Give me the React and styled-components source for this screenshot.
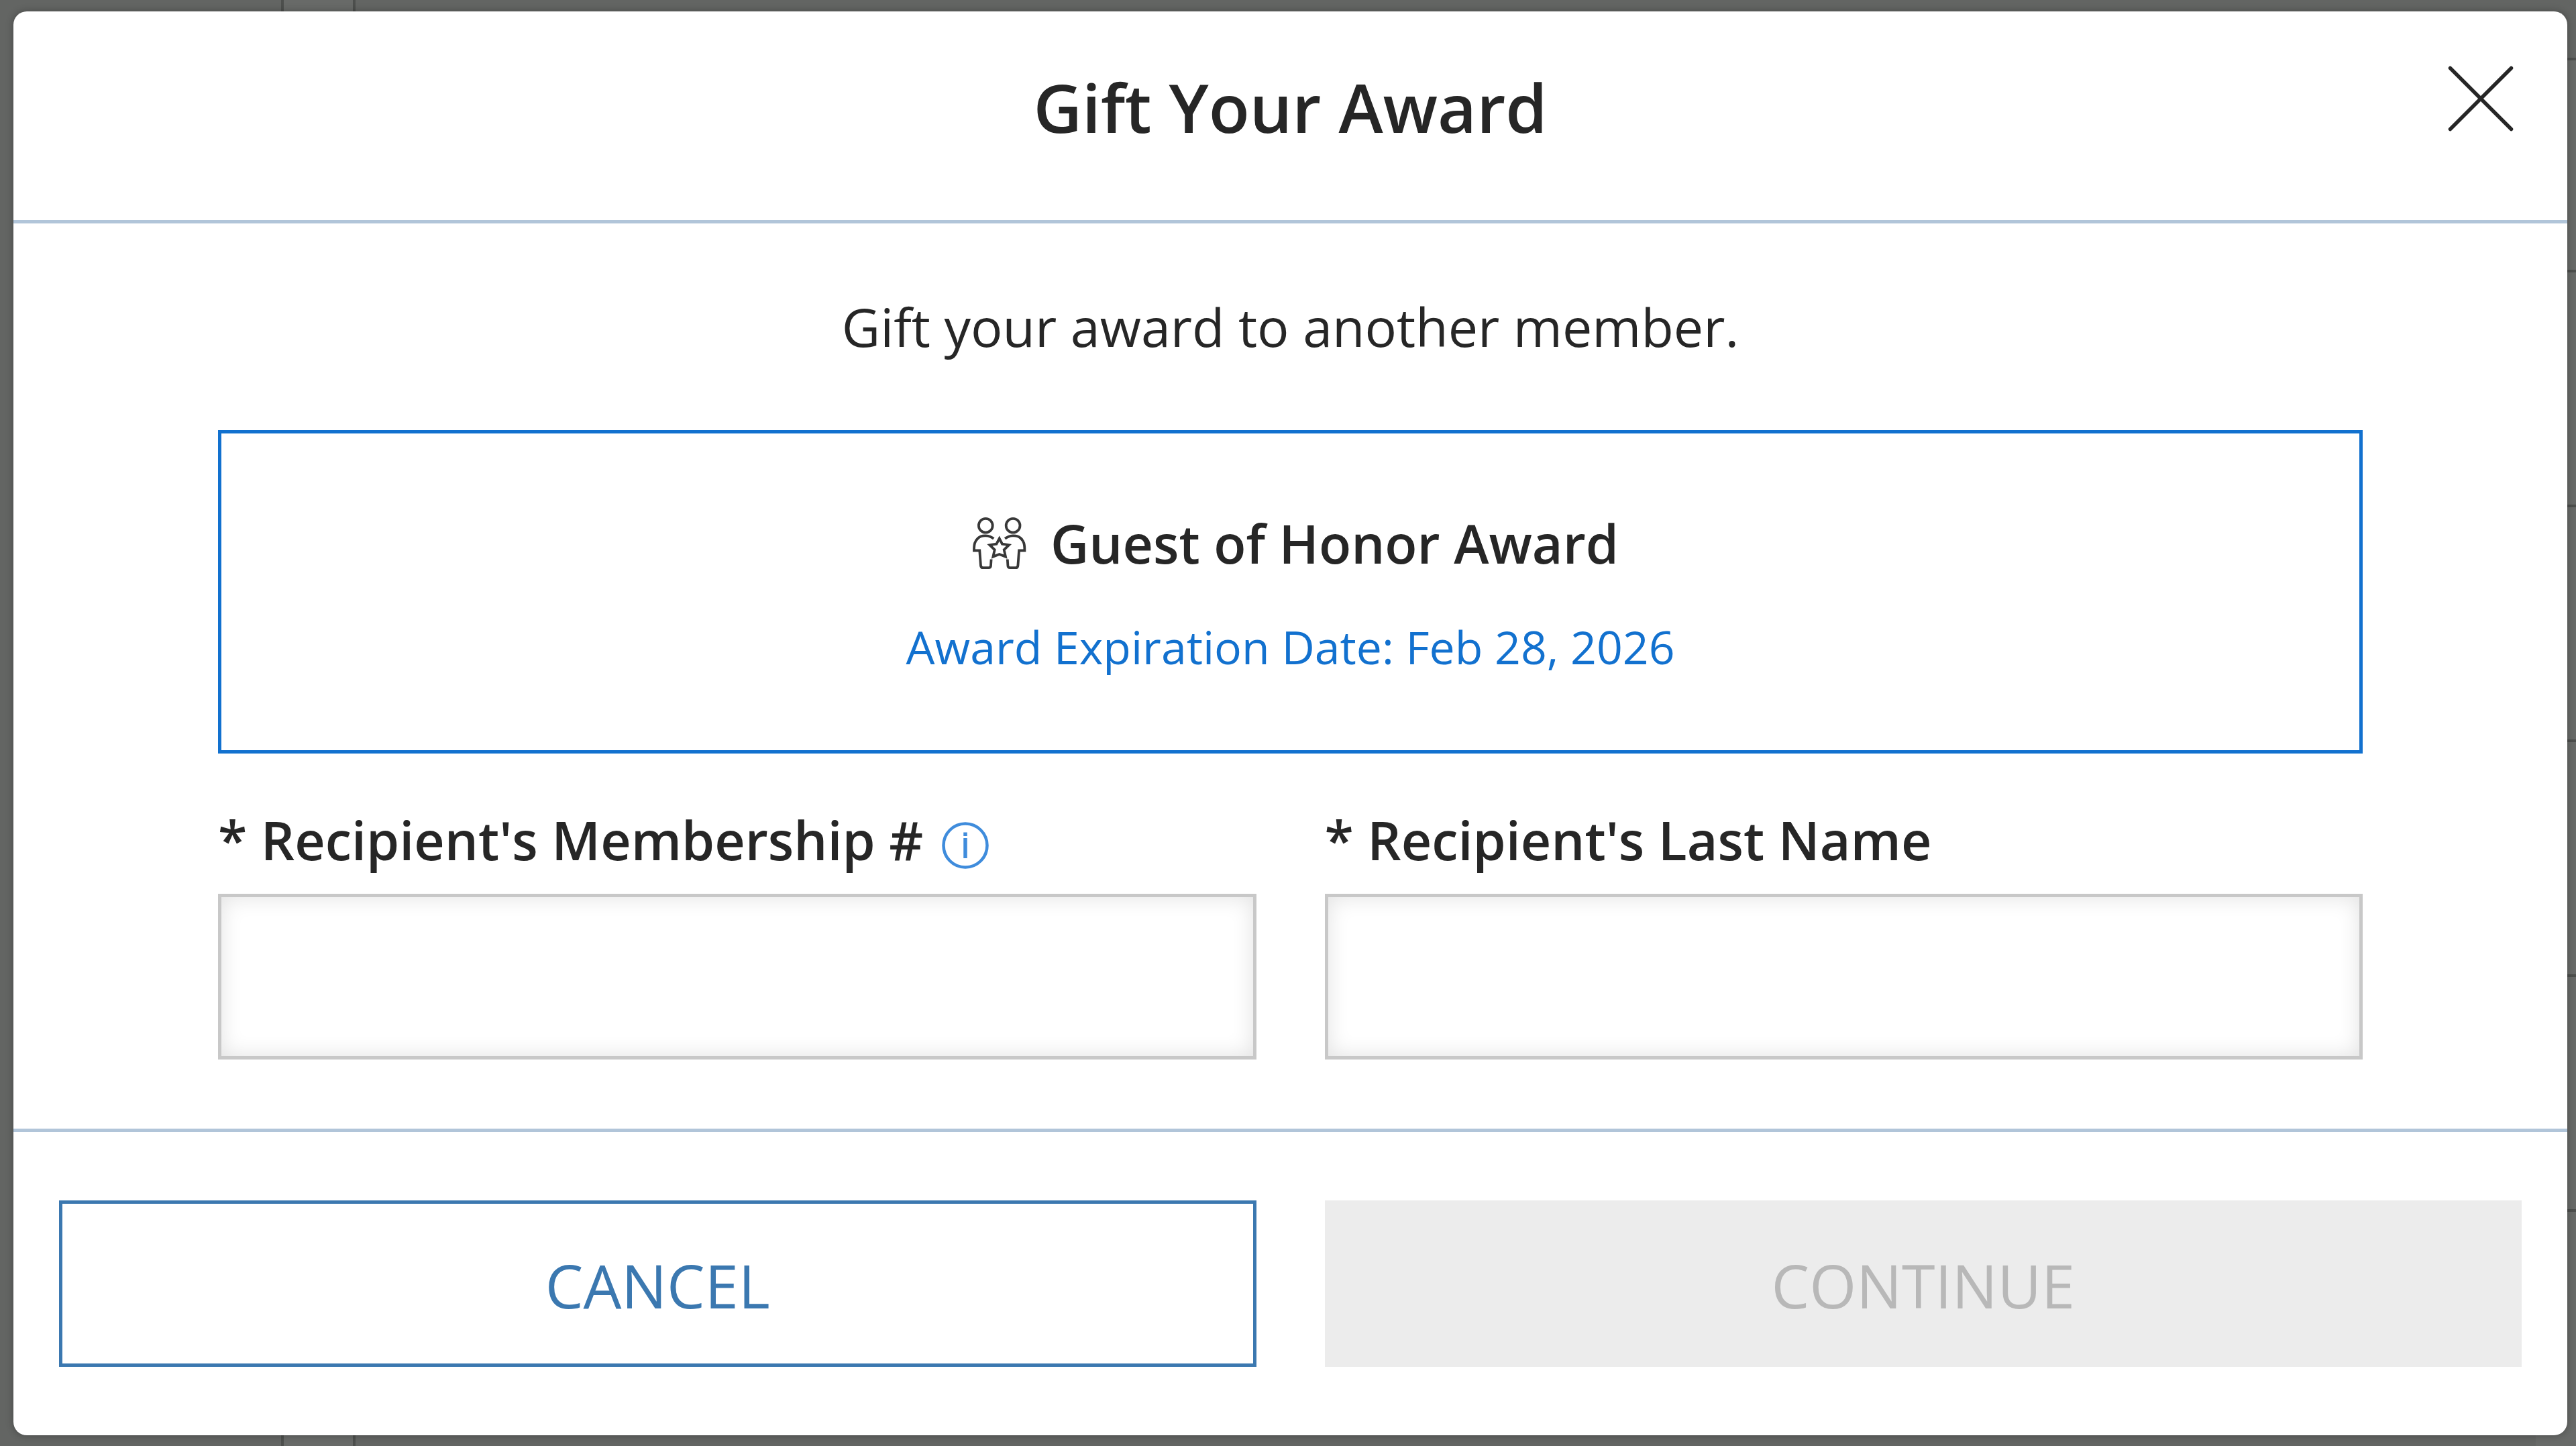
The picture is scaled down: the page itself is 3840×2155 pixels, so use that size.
import React, { useState } from "react";
import styled, { createGlobalStyle } from "styled-components";

const rows = [316, 350, 350, 350, 350];

export default function App() {
  const [member, setMember] = useState("");
  const [lastName, setLastName] = useState("");
  const ready = member !== "" && lastName !== "";

  return (
    <Screen>
      <GlobalStyle />
      <Behind aria-hidden="true">
        <BehindNav />
        <BehindGutter />
        <BehindMain />
        <BehindList>
          <BehindTop />
          {rows.map((height, i) => (
            <BehindRow key={i} $height={height} />
          ))}
          <BehindRest />
        </BehindList>
      </Behind>
      <Modal role="dialog" aria-modal="true" aria-labelledby="gift-title">
        <Header>
          <Title id="gift-title">Gift Your Award</Title>
          <CloseButton type="button" aria-label="Close">
            <CloseIcon />
          </CloseButton>
        </Header>
        <Body>
          <Intro>Gift your award to another member.</Intro>
          <AwardCard>
            <AwardName>
              <GuestsIcon />
              Guest of Honor Award
            </AwardName>
            <AwardDate>Award Expiration Date: Feb 28, 2026</AwardDate>
          </AwardCard>
          <Fields>
            <Field>
              <LabelRow>
                <Label htmlFor="member">* Recipient's Membership #</Label>
                <InfoButton type="button" aria-label="About membership numbers">
                  <InfoIcon />
                </InfoButton>
              </LabelRow>
              <Input
                id="member"
                type="text"
                value={member}
                onChange={(e) => setMember(e.target.value)}
              />
            </Field>
            <Field>
              <LabelRow>
                <Label htmlFor="last-name">* Recipient's Last Name</Label>
              </LabelRow>
              <Input
                id="last-name"
                type="text"
                value={lastName}
                onChange={(e) => setLastName(e.target.value)}
              />
            </Field>
          </Fields>
        </Body>
        <Footer>
          <Button type="button">CANCEL</Button>
          <Button type="button" disabled={!ready}>
            CONTINUE
          </Button>
        </Footer>
      </Modal>
    </Screen>
  );
}

function CloseIcon() {
  return (
    <svg
      width="98"
      height="98"
      viewBox="0 0 98 98"
      fill="none"
      stroke="#262626"
      strokeWidth="5.5"
      strokeLinecap="round"
    >
      <path d="M3.500 3.500 94.500 94.500M94.500 3.500 3.500 94.500" />
    </svg>
  );
}

function InfoIcon() {
  return (
    <svg width="70" height="70" viewBox="0 0 70 70" fill="none" stroke="#3f8cdc">
      <circle cx="35" cy="35" r="32.500" strokeWidth="4.500" />
      <path d="M35 15.500v5.500M35 24v30" strokeWidth="5.500" />
    </svg>
  );
}

function GuestsIcon() {
  return (
    <svg width="80" height="78" viewBox="0 0 80 78" fill="none" stroke="#383838" strokeWidth="3.8">
      <circle cx="19.300" cy="12.300" r="10.400" />
      <circle cx="60.100" cy="12.300" r="10.400" />
      <path d="M31.300 31.800C25 26.500 14 25.500 8 31C3 35.500 2 40 2 49.500H10.300L12 72q.300 3.200 3.500 3.200h8.200q3.200 0 3.300-3.200l.600-9.500" />
      <path d="M48.100 31.800C54.400 26.500 65.400 25.500 71.400 31C76.400 35.500 77.400 40 77.400 49.500H69.100L67.400 72q-.300 3.200-3.500 3.200h-8.200q-3.200 0-3.300-3.200l-.600-9.500" />
      <path d="M39.700 31.500 44 39.700 54 41.200 46.700 48.400 49 58.600 39.700 55 30.400 58.600 32.700 48.400 25.400 41.200 35.400 39.700Z" />
    </svg>
  );
}

const GlobalStyle = createGlobalStyle`
  * {
    box-sizing: border-box;
  }
  body {
    margin: 0;
    background: #636563;
    font-family: "Open Sans", "Noto Sans", sans-serif;
    color: #262626;
  }
  button, input {
    font-family: inherit;
  }
`;

const Screen = styled.div`
  position: relative;
  min-height: 100vh;
  padding: 17px 13px 16px 20px;
`;

/* the dimmed page under the dialog */
const Behind = styled.div`
  position: absolute;
  inset: 0;
  display: flex;
  overflow: hidden;
`;

const BehindNav = styled.div`
  width: 423px;
  border-right: 4px solid #4d4f4d;
`;

const BehindGutter = styled.div`
  width: 107px;
  background: #686a68;
  border-right: 4px solid #4d4f4d;
`;

const BehindMain = styled.div`
  flex: 1;
`;

const BehindList = styled.div`
  display: flex;
  flex-direction: column;
  width: 60px;
`;

const BehindTop = styled.div`
  height: 86px;
`;

const BehindRow = styled.div`
  height: ${(props) => props.$height}px;
  background: #686a68;
  border-top: 4px solid #4d4f4d;
`;

const BehindRest = styled.div`
  flex: 1;
  background: #686a68;
  border-top: 4px solid #4d4f4d;
`;

const Modal = styled.section`
  position: relative;
  background: #fff;
  border-radius: 20px;
  box-shadow: 0 0 12px rgba(0, 0, 0, 0.3);
`;

const Header = styled.header`
  display: grid;
  grid-template-columns: 1fr auto 1fr;
  align-items: start;
  height: 316px;
  padding: 70px 80px 0;
  border-bottom: 5px solid #b1c5d9;
`;

const Title = styled.h1`
  grid-column: 2;
  margin: 0;
  font-size: 100px;
  line-height: 144px;
  font-weight: 600;
`;

const CloseButton = styled.button`
  justify-self: end;
  display: flex;
  margin-top: 11px;
  padding: 0;
  border: 0;
  background: none;
  cursor: pointer;
`;

const Body = styled.div`
  padding: 96px 305px 103px;
`;

const Intro = styled.p`
  margin: 0 0 96px;
  font-size: 79px;
  line-height: 116px;
  text-align: center;
`;

const AwardCard = styled.div`
  display: flex;
  flex-direction: column;
  align-items: center;
  gap: 38px;
  padding: 106px 0 96px;
  border: 5px solid #1271cf;
`;

const AwardName = styled.h2`
  display: flex;
  align-items: center;
  gap: 36px;
  margin: 0;
  padding-left: 16px;
  font-size: 79px;
  line-height: 116px;
  font-weight: 600;
`;

const AwardDate = styled.p`
  margin: 0;
  font-size: 68px;
  line-height: 116px;
  color: #1271cf;
`;

const Fields = styled.div`
  display: grid;
  grid-template-columns: 1fr 1fr;
  gap: 102px;
  margin-top: 71px;
`;

const Field = styled.div`
  display: flex;
  flex-direction: column;
  gap: 22px;
`;

const LabelRow = styled.div`
  display: flex;
  align-items: center;
  gap: 28px;
`;

const Label = styled.label`
  font-size: 79px;
  line-height: 116px;
  font-weight: 600;
`;

const InfoButton = styled.button`
  display: flex;
  padding: 16px 0 0;
  border: 0;
  background: none;
  cursor: pointer;
`;

const Input = styled.input`
  width: 100%;
  height: 247px;
  padding: 0 48px;
  border: 5px solid #c8c8c8;
  border-radius: 0;
  background: #fff;
  box-shadow: inset 0 0 32px rgba(0, 0, 0, 0.12);
  font-size: 79px;
  color: #262626;
  outline: 0;
`;

const Footer = styled.footer`
  display: grid;
  grid-template-columns: 1fr 1fr;
  gap: 102px;
  padding: 102px 68px;
  border-top: 5px solid #b1c5d9;
`;

const Button = styled.button`
  height: 248px;
  padding: 4px 0 0;
  border: 5px solid #3b78b0;
  background: #fff;
  color: #3b78b0;
  font-size: 90px;
  cursor: pointer;

  &:disabled {
    border-color: #ececec;
    background: #ececec;
    color: #b8b8b8;
    cursor: default;
  }
`;
